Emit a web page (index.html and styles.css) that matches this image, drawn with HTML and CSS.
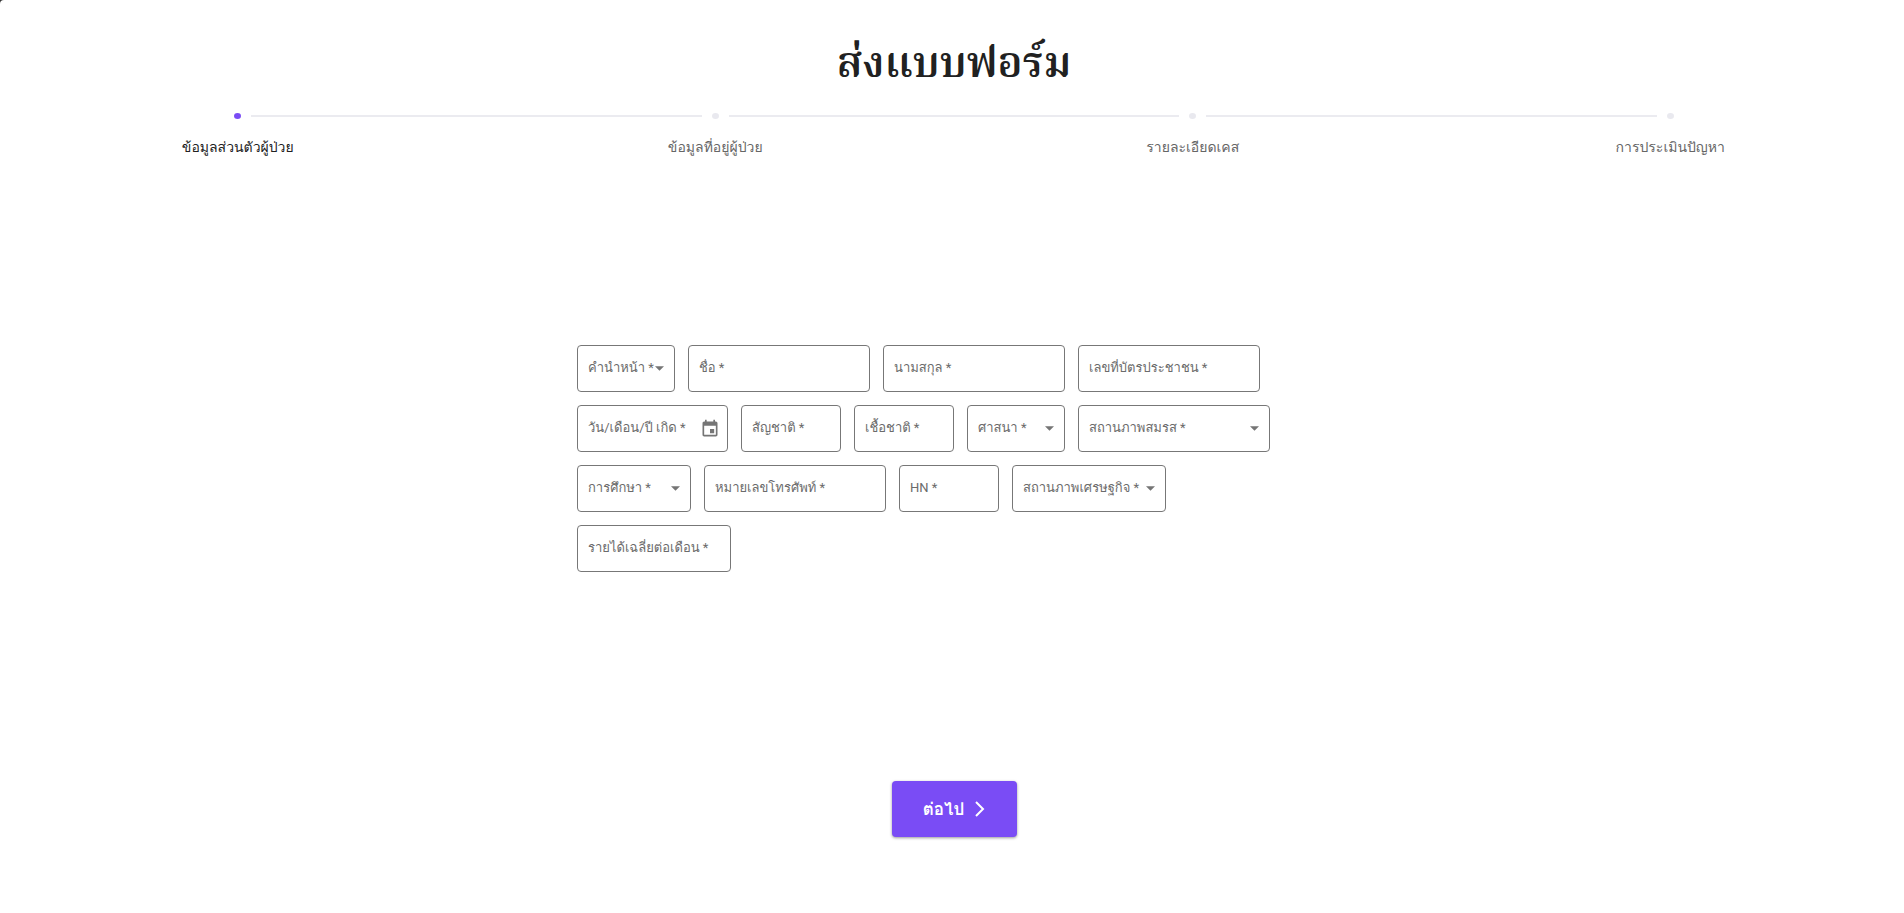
FILE: index.html
```html
<!DOCTYPE html>
<html lang="th">
<head>
<meta charset="utf-8">
<title>ส่งแบบฟอร์ม</title>
<meta name="viewport" content="width=device-width, initial-scale=1">
<link rel="stylesheet" href="styles.css">
</head>
<body>
<main class="page">
  <h1 class="title">ส่งแบบฟอร์ม</h1>
  <ol class="stepper">
    <li class="step step-active"><span class="dot"></span><span class="step-label">ข้อมูลส่วนตัวผู้ป่วย</span></li>
    <li class="step"><span class="dot"></span><span class="step-label">ข้อมูลที่อยู่ผู้ป่วย</span></li>
    <li class="step"><span class="dot"></span><span class="step-label">รายละเอียดเคส</span></li>
    <li class="step"><span class="dot"></span><span class="step-label">การประเมินปัญหา</span></li>
  </ol>
  <form class="form">
    <div class="rows">
      <div class="row">
        <div class="field w-prefix"><label for="prefix">คำนำหน้า *</label><select id="prefix"><option></option></select><svg class="caret" viewBox="0 0 10 5"><path d="M0 0h10L5 5z"/></svg></div>
        <div class="field w-text"><label for="fname">ชื่อ *</label><input id="fname" type="text"></div>
        <div class="field w-text"><label for="lname">นามสกุล *</label><input id="lname" type="text"></div>
        <div class="field w-text"><label for="cid">เลขที่บัตรประชาชน *</label><input id="cid" type="text"></div>
      </div>
      <div class="row">
        <div class="field w-date"><label for="dob">วัน/เดือน/ปี เกิด *</label><input id="dob" type="text"><button class="cal" type="button" aria-label="เลือกวันที่"><svg viewBox="0 0 24 24"><path d="M17 12h-5v5h5v-5zM16 1v2H8V1H6v2H5c-1.110 0-1.990.9-1.990 2L3 19c0 1.100.89 2 2 2h14c1.100 0 2-.9 2-2V5c0-1.100-.9-2-2-2h-1V1h-2zm3 18H5V8h14v11z"/></svg></button></div>
        <div class="field w-short"><label for="nation">สัญชาติ *</label><input id="nation" type="text"></div>
        <div class="field w-short"><label for="race">เชื้อชาติ *</label><input id="race" type="text"></div>
        <div class="field w-prefix"><label for="religion">ศาสนา *</label><select id="religion"><option></option></select><svg class="caret" viewBox="0 0 10 5"><path d="M0 0h10L5 5z"/></svg></div>
        <div class="field w-marital"><label for="marital">สถานภาพสมรส *</label><select id="marital"><option></option></select><svg class="caret" viewBox="0 0 10 5"><path d="M0 0h10L5 5z"/></svg></div>
      </div>
      <div class="row">
        <div class="field w-edu"><label for="edu">การศึกษา *</label><select id="edu"><option></option></select><svg class="caret" viewBox="0 0 10 5"><path d="M0 0h10L5 5z"/></svg></div>
        <div class="field w-text"><label for="phone">หมายเลขโทรศัพท์ *</label><input id="phone" type="tel"></div>
        <div class="field w-short"><label for="hn">HN *</label><input id="hn" type="text"></div>
        <div class="field w-long"><label for="econ">สถานภาพเศรษฐกิจ *</label><select id="econ"><option></option></select><svg class="caret" viewBox="0 0 10 5"><path d="M0 0h10L5 5z"/></svg></div>
      </div>
      <div class="row">
        <div class="field w-long"><label for="income">รายได้เฉลี่ยต่อเดือน *</label><input id="income" type="text"></div>
      </div>
    </div>
    <button class="next" type="button"><span>ต่อไป</span><svg viewBox="0 0 10 16"><path d="M1 1l7 7-7 7"/></svg></button>
  </form>
</main>
</body>
</html>
```
FILE: styles.css
```css
* { box-sizing: border-box; }
html { background: #333; }
body {
  margin: 0;
  background: #333;
  font-family: Roboto, Loma, sans-serif;
  color: #212121;
}
.page {
  min-height: 100vh;
  overflow-x: hidden;
  background: #fff;
  border-top-left-radius: 4px;
}
.title {
  margin: 36px 0 0;
  padding-left: 4px;
  text-align: center;
  font-family: "Noto Serif Thai", "Liberation Serif", serif;
  font-size: 42px;
  line-height: 60px;
  font-weight: 600;
}
.stepper {
  display: flex;
  margin: 17px -5px 0 -1px;
  padding: 0;
  list-style: none;
}
.step {
  flex: 1;
  display: grid;
  grid-template-columns: 1fr 7px 1fr;
  align-items: center;
  column-gap: 10px;
}
.step::before, .step::after {
  content: "";
  grid-row: 1;
  height: 2px;
  background: #ebebf0;
}
.step::before { grid-column: 1; }
.step::after { grid-column: 3; }
.step:first-child::before, .step:last-child::after { background: none; }
.dot {
  grid-area: 1 / 2;
  height: 6px;
  border-radius: 50%;
  background: #e9e9ef;
}
.step-label {
  grid-area: 2 / 1 / 3 / 4;
  margin-top: 18px;
  text-align: center;
  font-size: 14px;
  line-height: 20px;
  color: #666;
}
.step-active .dot { background: #7a4cf5; }
.step-active .step-label { color: #212121; }
.form {
  display: flex;
  flex-direction: column;
  align-items: center;
  margin-top: 188px;
}
.rows {
  display: flex;
  flex-direction: column;
  gap: 13px;
  width: 750px;
}
.row { display: flex; gap: 13px; }
.field {
  flex: none;
  display: grid;
  grid-template-columns: 1fr auto;
  align-items: center;
  height: 47px;
  border: 1px solid #777;
  border-radius: 4px;
}
.field label {
  grid-area: 1 / 1 / 2 / 3;
  z-index: 1;
  padding: 0 0 2px 10px;
  font-size: 13px;
  line-height: 20px;
  white-space: nowrap;
  color: #6b6b6b;
  pointer-events: none;
}
.field input, .field select {
  grid-area: 1 / 1 / 2 / 3;
  width: 100%;
  height: 100%;
  padding: 0 10px;
  border: 0;
  outline: 0;
  appearance: none;
  background: none;
  font: inherit;
  font-size: 13px;
}
.caret {
  grid-area: 1 / 2;
  width: 9px;
  height: 5px;
  margin-right: 10px;
  fill: #757575;
  pointer-events: none;
}
.cal {
  grid-area: 1 / 2;
  z-index: 1;
  width: 20px;
  height: 20px;
  margin-right: 7px;
  padding: 0;
  border: 0;
  background: none;
}
.cal svg { display: block; width: 20px; height: 20px; fill: #757575; }
.w-prefix { width: 98px; }
.w-text { width: 182px; }
.w-date { width: 151px; }
.w-short { width: 100px; }
.w-marital { width: 192px; }
.w-edu { width: 114px; }
.w-long { width: 154px; }
.next {
  display: flex;
  align-items: center;
  justify-content: center;
  gap: 11px;
  width: 125px;
  height: 56px;
  margin: 209px 0 24px 4px;
  border: 0;
  border-radius: 4px;
  background: #7a4cf5;
  box-shadow: 0 1px 3px rgba(0, 0, 0, 0.4);
  color: #fff;
  font-family: inherit;
  font-size: 17px;
  line-height: 24px;
  font-weight: 700;
}
.next svg { width: 10px; height: 16px; fill: none; stroke: #fff; stroke-width: 2; }
```
